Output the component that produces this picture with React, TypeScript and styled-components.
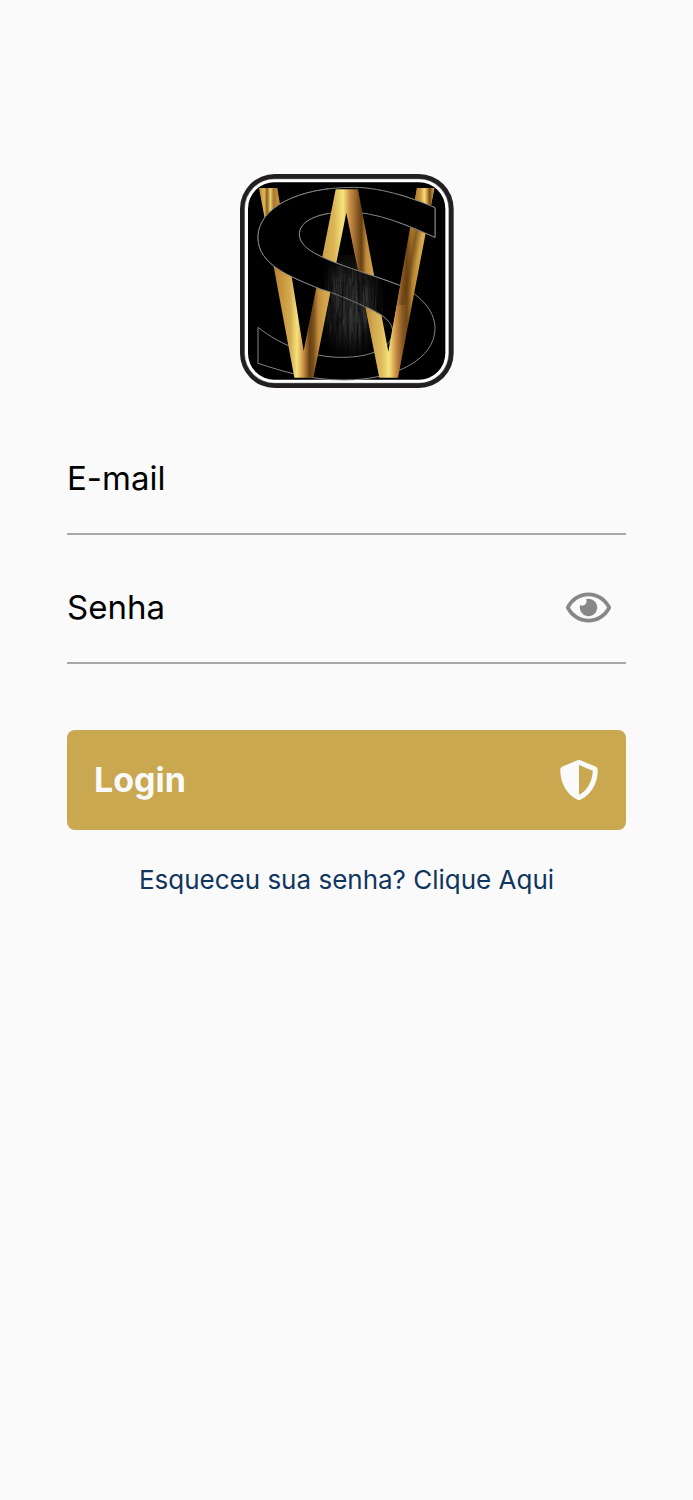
import React, { useState } from 'react';
import styled, { createGlobalStyle } from 'styled-components';
import { FaRegEye, FaShieldAlt } from 'react-icons/fa';

const GlobalStyle = createGlobalStyle`
  * { box-sizing: border-box; }
  body {
    margin: 0;
    background: #fafafa;
    color: #000;
    font-family: Inter, 'Liberation Sans', sans-serif;
  }
`;

const Page = styled.main`
  min-height: 100vh;
  padding: 174px 67px 64px;
  display: flex;
  flex-direction: column;
  align-items: center;
`;

const LogoArt = styled.svg`
  display: block;
  width: 214px;
  height: 214px;
`;

const Form = styled.form`
  width: 100%;
  margin-top: 36px;
  display: flex;
  flex-direction: column;
`;

const Field = styled.div`
  height: 111px;
  margin-bottom: 18px;
  display: flex;
  align-items: center;
  border-bottom: 2px solid #a9a9a9;
`;

const TextInput = styled.input`
  flex: 1;
  min-width: 0;
  height: 100%;
  padding: 0 0 2px;
  border: 0;
  outline: 0;
  background: transparent;
  color: #000;
  font: 400 33px/40px Inter, 'Liberation Sans', sans-serif;
  &::placeholder { color: #000; opacity: 1; }
`;

const IconButton = styled.button`
  display: flex;
  margin-right: 15px;
  padding: 0;
  border: 0;
  background: none;
  color: #878787;
  cursor: pointer;
`;

const LoginButton = styled.button`
  height: 100px;
  margin-top: 48px;
  padding: 0 27px;
  display: flex;
  align-items: center;
  justify-content: space-between;
  border: 0;
  border-radius: 8px;
  background: #c9a850;
  color: #fafafa;
  font: 700 34px/40px Inter, 'Liberation Sans', sans-serif;
  cursor: pointer;
`;

const ForgotLink = styled.a`
  margin-top: 34px;
  color: #10365f;
  font-size: 26px;
  line-height: 32px;
  text-decoration: none;
`;

const S_PATH =
  'M614 128C560 105 460 67 370 67C200 67 83 130 83 217C83 300 180 335 270 372C300 380 350 400 400 423C455 445 487 470 487 500C487 550 420 577 335 577C240 577 150 540 83 487V595C160 620 240 645 340 645C500 645 614 580 614 490C614 430 560 385 505 360C440 335 350 308 300 287C240 262 207 240 207 207C207 165 270 141 350 141C440 141 530 180 614 217Z';

// Repeatable noise in 0..1, so the brushed texture is the same on every load.
const noise = (n: number) => {
  const v = Math.sin(n * 127.1 + 11.7) * 43758.5453;
  return v - Math.floor(v);
};

const STREAKS = Array.from({ length: 190 }, (_, i) => ({
  x: 276 + Math.floor(noise(i) * 60) * 3,
  y: 280 + noise(i + 300) * 220,
  h: 20 + noise(i + 600) * 110,
  o: 0.15 + noise(i + 900) * 0.5,
}));

const GOLD: [number, string][] = [
  [86, '#c08a3a'], [102, '#dcb658'], [110, '#8a5c20'], [120, '#ecd070'], [130, '#a87731'], [141, '#c08a3a'],
  [158, '#c9993f'], [180, '#d4ac52'], [200, '#f6e47c'], [220, '#c98b45'], [238, '#644012'],
  [250, '#7c5219'], [264, '#c28c3d'], [285, '#d2a64c'], [312, '#dcb658'], [338, '#f6e67e'],
  [358, '#cc9048'], [380, '#8f5e25'], [393, '#643f12'], [408, '#c08a3a'], [432, '#d4ac52'],
  [455, '#dfbd5e'], [476, '#f6e67e'], [497, '#cb8d46'], [516, '#8a5a22'], [530, '#6f4817'],
  [546, '#b9832f'], [560, '#c9993f'], [580, '#d6ae52'], [612, '#c9993f'],
];

const GOLD_TIP: [number, string][] = [
  [558, '#b9832f'], [570, '#c9993f'], [582, '#f3df78'], [591, '#c9903f'], [598, '#75491a'], [612, '#d6ae52'],
];

function GoldGradient({ id, stops }: { id: string; stops: [number, string][] }) {
  const from = stops[0][0];
  const to = stops[stops.length - 1][0];
  return (
    <linearGradient id={id} gradientUnits="userSpaceOnUse" x1={from} x2={to} y1="0" y2="0">
      {stops.map(([x, c]) => (
        <stop key={x} offset={(x - from) / (to - from)} stopColor={c} />
      ))}
    </linearGradient>
  );
}

function Logo() {
  return (
    <LogoArt viewBox="29 27 642 642" role="img" aria-label="WS">
      <defs>
        <GoldGradient id="gold" stops={GOLD} />
        <GoldGradient id="goldTip" stops={GOLD_TIP} />
        <linearGradient id="shade" gradientUnits="userSpaceOnUse" x1="540" x2="576" y1="200" y2="207">
          <stop offset="0" stopColor="#5d3a11" stopOpacity="0" />
          <stop offset="0.5" stopColor="#5d3a11" stopOpacity="0.6" />
          <stop offset="1" stopColor="#5d3a11" stopOpacity="0" />
        </linearGradient>
        <radialGradient id="fade" gradientUnits="userSpaceOnUse" cx="0" cy="0" r="1" gradientTransform="translate(362 415) scale(105 175)">
          <stop offset="0" stopColor="#fff" />
          <stop offset="0.5" stopColor="#fff" stopOpacity="0.75" />
          <stop offset="1" stopColor="#fff" stopOpacity="0" />
        </radialGradient>
        <mask id="brushed" maskUnits="userSpaceOnUse" x="250" y="230" width="230" height="370">
          <rect x="250" y="230" width="230" height="370" fill="url(#fade)" />
        </mask>
        <clipPath id="front">
          <path d="M60 40H298V220H420L500 220V40H640V222H533L489 470H60Z" />
        </clipPath>
        <clipPath id="gap">
          <path d="M348 150L445 630H252ZM275 276L520 366L485 470L400 423L285 376Z" />
        </clipPath>
      </defs>
      <rect x="29" y="27" width="641" height="642" rx="104" fill="#231f20" />
      <rect x="42" y="41" width="614" height="614" rx="90" fill="#8d8b8c" />
      <rect x="44" y="43" width="610" height="610" rx="88" fill="#fff" />
      <rect x="53" y="52" width="592" height="592" rx="79" fill="#000" />
      <path d={S_PATH} stroke="#858585" strokeWidth="3" />
      <path
        d="M86 69H141L220 558L316 73H383L474 560L560 69H612L503 638H447L348 143L249 638H192Z"
        fill="url(#gold)"
      />
      <path d="M560 69H612L590 184H540Z" fill="url(#goldTip)" />
      <path d="M540 184H590L545 420H499Z" fill="url(#shade)" />
      <path d={S_PATH} stroke="#858585" strokeWidth="3" clipPath="url(#front)" />
      <g clipPath="url(#gap)">
        <g mask="url(#brushed)" fill="#5c5c5c">
          <rect x="276" y="270" width="184" height="310" opacity="0.35" />
          {STREAKS.map((s, i) => (
            <rect key={i} x={s.x} y={s.y} width="3" height={s.h} opacity={s.o} fill={i % 3 ? '#505050' : '#000'} />
          ))}
        </g>
      </g>
    </LogoArt>
  );
}

export default function App() {
  const [visible, setVisible] = useState(false);
  return (
    <>
      <GlobalStyle />
      <Page>
        <Logo />
        <Form onSubmit={(e) => e.preventDefault()}>
          <Field>
            <TextInput id="email" type="email" placeholder="E-mail" aria-label="E-mail" />
          </Field>
          <Field>
            <TextInput
              id="senha"
              type={visible ? 'text' : 'password'}
              placeholder="Senha"
              aria-label="Senha"
            />
            <IconButton type="button" aria-label="Mostrar senha" onClick={() => setVisible(!visible)}>
              <FaRegEye size={45} />
            </IconButton>
          </Field>
          <LoginButton type="submit">
            Login
            <FaShieldAlt size={40} />
          </LoginButton>
        </Form>
        <ForgotLink href="#recuperar">Esqueceu sua senha? Clique Aqui</ForgotLink>
      </Page>
    </>
  );
}
